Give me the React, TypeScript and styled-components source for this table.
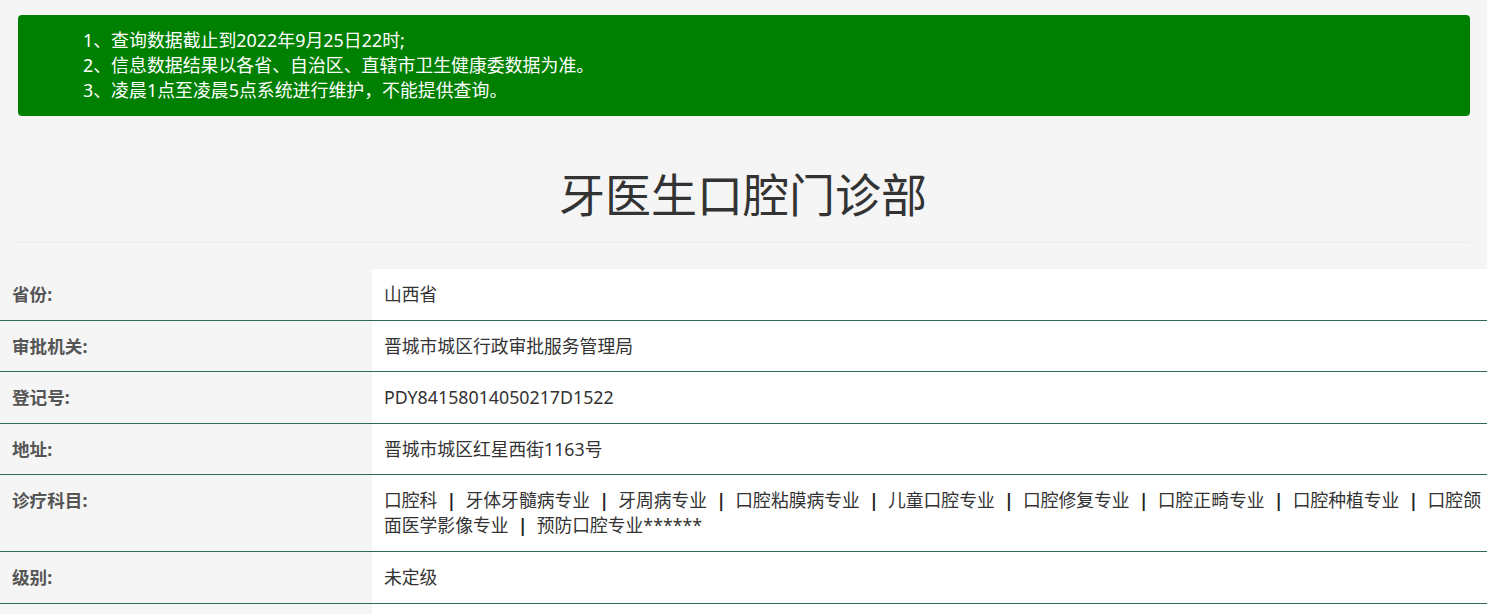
import React from "react";
import styled, { createGlobalStyle } from "styled-components";

const GlobalStyle = createGlobalStyle`
  html, body {
    margin: 0;
    padding: 0;
    background: #f5f5f5;
    font-family: "Noto Sans", "Noto Sans CJK SC", sans-serif;
    color: #333;
  }
  * { box-sizing: border-box; }
`;

const Page = styled.div`
  width: 100%;
  overflow: hidden;
`;

const Top = styled.div`
  padding: 15px 17px 0 16px;
`;

const Notice = styled.div`
  margin-left: 2px;
  background: #008000;
  border-radius: 4px;
  padding: 13px 0 13px 65px;
  color: #fff;
  font-size: 17.9px;
  line-height: 25px;
`;

const Title = styled.h1`
  margin: 51px 0 0;
  text-align: center;
  font-family: "Noto Sans CJK SC", sans-serif;
  font-size: 46px;
  line-height: 50px;
  font-weight: 400;
  color: #333;
`;

const Rule = styled.hr`
  margin: 25px 0 0;
  border: 0;
  border-top: 1px solid #ebebeb;
`;

const Table = styled.div`
  margin-top: 26px;
  display: grid;
  grid-template-columns: 372px 1fr;
`;

const Label = styled.div`
  padding: 13px 12px 12.6px;
  font-size: 17.6px;
  line-height: 25px;
  font-weight: 700;
  color: #555;
  background: #f5f5f5;
  border-bottom: 1px solid #2c6e4f;
`;

const Value = styled.div`
  padding: 13px 0 12.6px 12px;
  font-size: 17.8px;
  line-height: 25px;
  color: #333;
  background: #fff;
  border-bottom: 1px solid #2c6e4f;
`;

const Sep = styled.span`
  color: #222;
  font-weight: 700;
  margin: 0 9.2px;
`;

const notices = [
  "1、查询数据截止到2022年9月25日22时;",
  "2、信息数据结果以各省、自治区、直辖市卫生健康委数据为准。",
  "3、凌晨1点至凌晨5点系统进行维护，不能提供查询。",
];

const subjects = [
  "口腔科",
  "牙体牙髓病专业",
  "牙周病专业",
  "口腔粘膜病专业",
  "儿童口腔专业",
  "口腔修复专业",
  "口腔正畸专业",
  "口腔种植专业",
  "口腔颌面医学影像专业",
  "预防口腔专业******",
];

const rows: { label: string; value: React.ReactNode }[] = [
  { label: "省份:", value: "山西省" },
  { label: "审批机关:", value: "晋城市城区行政审批服务管理局" },
  { label: "登记号:", value: "PDY84158014050217D1522" },
  { label: "地址:", value: "晋城市城区红星西街1163号" },
  {
    label: "诊疗科目:",
    value: subjects.map((s, i) => (
      <React.Fragment key={s}>
        {i > 0 && <Sep>|</Sep>}
        {s}
      </React.Fragment>
    )),
  },
  { label: "级别:", value: "未定级" },
  { label: "", value: "" },
];

export default function App() {
  return (
    <Page>
      <GlobalStyle />
      <Top>
        <Notice>
          {notices.map((n) => (
            <div key={n}>{n}</div>
          ))}
        </Notice>
        <Title>牙医生口腔门诊部</Title>
        <Rule />
      </Top>
      <Table>
        {rows.map((r, i) => (
          <React.Fragment key={i}>
            <Label>{r.label || "\u00a0"}</Label>
            <Value>{r.value || "\u00a0"}</Value>
          </React.Fragment>
        ))}
      </Table>
    </Page>
  );
}
